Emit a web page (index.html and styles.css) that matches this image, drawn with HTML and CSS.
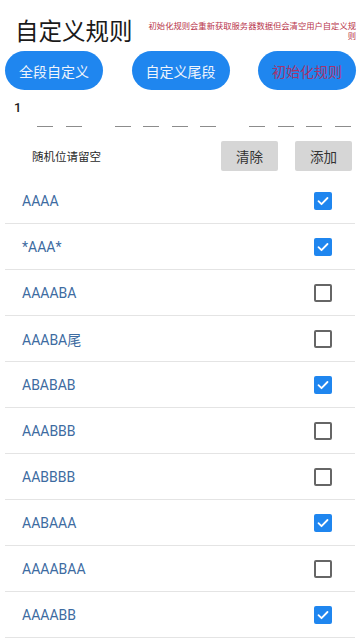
FILE: index.html
```html
<!DOCTYPE html>
<html lang="zh">
<head>
<meta charset="utf-8">
<link rel="stylesheet" href="styles.css">
</head>
<body>
<div class="page">
  <header class="header">
    <h1 class="title">自定义规则</h1>
    <p class="note">初始化规则会重新获取服务器数据但会清空用户自定义规则</p>
  </header>
  <div class="actions">
    <button class="pill">全段自定义</button>
    <button class="pill">自定义尾段</button>
    <button class="pill pill-warn">初始化规则</button>
  </div>
  <div class="code">
    <div class="code-label">1</div>
    <div class="slots">
      <div class="group"><span class="slot"></span><span class="slot"></span></div>
      <div class="group"><span class="slot"></span><span class="slot"></span><span class="slot"></span><span class="slot"></span></div>
      <div class="group"><span class="slot"></span><span class="slot"></span><span class="slot"></span><span class="slot"></span></div>
    </div>
  </div>
  <div class="controls">
    <span class="hint">随机位请留空</span>
    <button class="gbtn">清除</button>
    <button class="gbtn">添加</button>
  </div>
  <ul class="list">
    <li class="row"><span class="rule">AAAA</span><span class="cb on"><svg viewBox="0 0 18 18"><path d="M4.5 9.2l3 3 6-6.2" fill="none" stroke="#fff" stroke-width="1.8" stroke-linecap="round" stroke-linejoin="round"/></svg></span></li>
    <li class="row"><span class="rule">*AAA*</span><span class="cb on"><svg viewBox="0 0 18 18"><path d="M4.5 9.2l3 3 6-6.2" fill="none" stroke="#fff" stroke-width="1.8" stroke-linecap="round" stroke-linejoin="round"/></svg></span></li>
    <li class="row"><span class="rule">AAAABA</span><span class="cb"></span></li>
    <li class="row"><span class="rule">AAABA尾</span><span class="cb"></span></li>
    <li class="row"><span class="rule">ABABAB</span><span class="cb on"><svg viewBox="0 0 18 18"><path d="M4.5 9.2l3 3 6-6.2" fill="none" stroke="#fff" stroke-width="1.8" stroke-linecap="round" stroke-linejoin="round"/></svg></span></li>
    <li class="row"><span class="rule">AAABBB</span><span class="cb"></span></li>
    <li class="row"><span class="rule">AABBBB</span><span class="cb"></span></li>
    <li class="row"><span class="rule">AABAAA</span><span class="cb on"><svg viewBox="0 0 18 18"><path d="M4.5 9.2l3 3 6-6.2" fill="none" stroke="#fff" stroke-width="1.8" stroke-linecap="round" stroke-linejoin="round"/></svg></span></li>
    <li class="row"><span class="rule">AAAABAA</span><span class="cb"></span></li>
    <li class="row"><span class="rule">AAAABB</span><span class="cb on"><svg viewBox="0 0 18 18"><path d="M4.5 9.2l3 3 6-6.2" fill="none" stroke="#fff" stroke-width="1.8" stroke-linecap="round" stroke-linejoin="round"/></svg></span></li>
  </ul>
</div>
</body>
</html>
```
FILE: styles.css
```css
* { box-sizing: border-box; }
html, body { margin: 0; padding: 0; background: #fff; }
body {
  width: 360px;
  height: 640px;
  overflow: hidden;
  font-family: Roboto, "Noto Sans CJK SC", sans-serif;
  color: #222;
}
.header {
  display: flex;
  align-items: center;
  justify-content: space-between;
  padding: 14px 4px 0 15px;
  height: 50px;
}
.title {
  margin: 0;
  font-size: 23.5px;
  font-weight: 400;
  line-height: 30px;
  color: #1a1a1a;
  white-space: nowrap;
}
.note {
  margin: 0 0 2px 0;
  width: 210px;
  font-size: 8.3px;
  line-height: 10.5px;
  color: #b8344a;
  text-align: right;
}
.actions {
  display: flex;
  justify-content: space-between;
  padding: 0 4px 0 5px;
  margin-top: 1px;
}
.pill {
  width: 98px;
  height: 39px;
  border: none;
  border-radius: 20px;
  background: #1f86ef;
  color: #eef4fc;
  font-family: inherit;
  font-size: 14px;
  padding: 0;
}
.pill-warn { color: #a4346e; }
.code {
  padding-top: 11px;
}
.code-label {
  padding-left: 14px;
  font-size: 13px;
  line-height: 14px;
  font-weight: 500;
  color: #222;
}
.slots {
  display: flex;
  gap: 33px;
  padding-left: 37px;
  height: 12px;
  align-items: flex-end;
}
.group {
  display: flex;
  gap: 12.5px;
}
.slot {
  display: block;
  width: 16px;
  height: 1.5px;
  background: #8c8c8c;
}
.controls {
  display: flex;
  align-items: center;
  margin-top: 14px;
  padding: 0 8px 0 32px;
  height: 30px;
}
.hint {
  flex: 1;
  font-size: 11.5px;
  color: #2a2a2a;
}
.gbtn {
  width: 57px;
  height: 30px;
  border: none;
  border-radius: 2px;
  background: #d6d6d6;
  color: #333;
  font-family: inherit;
  font-size: 13.5px;
  padding: 0;
  margin-left: 17px;
}
.list {
  list-style: none;
  margin: 7px 0 0 0;
  padding: 0;
}
.row {
  display: flex;
  align-items: center;
  justify-content: space-between;
  height: 46px;
  margin: 0 5px;
  padding: 0 23px 0 17px;
  border-bottom: 1px solid #e4e4e4;
}
.rule {
  font-size: 14px;
  color: #3d6ba1;
}
.cb {
  display: block;
  width: 18px;
  height: 18px;
  border: 2px solid #666;
  border-radius: 2px;
}
.cb.on {
  border: none;
  background: #1f86ef;
}
.cb svg {
  display: block;
  width: 18px;
  height: 18px;
}
```
